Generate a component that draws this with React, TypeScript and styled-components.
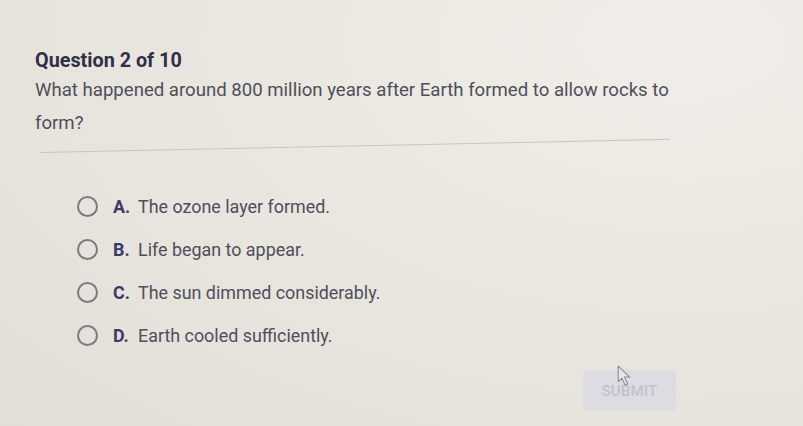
import { createGlobalStyle } from 'styled-components';
import styled from 'styled-components';

const GlobalStyle = createGlobalStyle`
  html, body {
    margin: 0;
    padding: 0;
  }
  body {
    font-family: Roboto, "Liberation Sans", Arial, sans-serif;
    background: #e7e4de;
  }
`;

const Page = styled.div`
  width: 803px;
  height: 426px;
  box-sizing: border-box;
  padding: 47px 0 0 35px;
  background: radial-gradient(ellipse at 85% 10%, #f1eee9 0%, #eae7e1 45%, #e2ded7 100%);
  overflow: hidden;
  position: relative;
`;

const Title = styled.h2`
  margin: 0;
  font-size: 19.8px;
  line-height: 28px;
  font-weight: 700;
  color: #2f3048;
`;

const Prompt = styled.p`
  margin: -1px 0 0;
  width: 650px;
  font-size: 18.6px;
  line-height: 33px;
  color: #4e4f5a;
`;

const Divider = styled.hr`
  margin: 12px 0 0 5px;
  width: 630px;
  border: none;
  border-top: 1px solid #c9c6c1;
  transform: rotate(-1.2deg);
  transform-origin: left;
`;

const Options = styled.ul`
  list-style: none;
  margin: 41px 0 0 42px;
  padding: 0;
  display: flex;
  flex-direction: column;
  gap: 19px;
`;

const Option = styled.li`
  display: flex;
  align-items: center;
  height: 24px;
  font-size: 17.9px;
  color: #4e4f5a;
`;

const Radio = styled.span`
  width: 17px;
  height: 17px;
  border: 2px solid #7a7a80;
  border-radius: 50%;
  margin-right: 15px;
  flex: none;
`;

const Letter = styled.span`
  font-weight: 700;
  color: #3b3a66;
  width: 25px;
`;

const Footer = styled.div`
  display: flex;
  justify-content: flex-end;
  width: 641px;
  margin-top: 23px;
`;

const SubmitButton = styled.button`
  position: relative;
  width: 93px;
  height: 41px;
  border: none;
  border-radius: 4px;
  background: #dcdce2;
  color: #bfc1d2;
  font-family: inherit;
  font-size: 15px;
  font-weight: 500;
  letter-spacing: 0.2px;
`;

const Cursor = styled.svg`
  position: absolute;
  left: 34px;
  top: -5px;
  width: 15px;
  height: 21px;
`;

const options = [
  ['A.', 'The ozone layer formed.'],
  ['B.', 'Life began to appear.'],
  ['C.', 'The sun dimmed considerably.'],
  ['D.', 'Earth cooled sufficiently.'],
];

export default function App() {
  return (
    <>
      <GlobalStyle />
      <Page>
        <Title>Question 2 of 10</Title>
        <Prompt>
          What happened around 800 million years after Earth formed to allow rocks to form?
        </Prompt>
        <Divider />
        <Options>
          {options.map(([letter, text]) => (
            <Option key={letter}>
              <Radio />
              <Letter>{letter}</Letter>
              {text}
            </Option>
          ))}
        </Options>
        <Footer>
          <SubmitButton>
            SUBMIT
            <Cursor viewBox="0 0 14 20">
              <path
                d="M1 1 L1 16 L4.5 12.5 L7.5 19 L10 18 L7 11.5 L12 11.5 Z"
                fill="#e6e6ea"
                stroke="#8a8a96"
                strokeWidth="1"
                strokeLinejoin="round"
              />
            </Cursor>
          </SubmitButton>
        </Footer>
      </Page>
    </>
  );
}
